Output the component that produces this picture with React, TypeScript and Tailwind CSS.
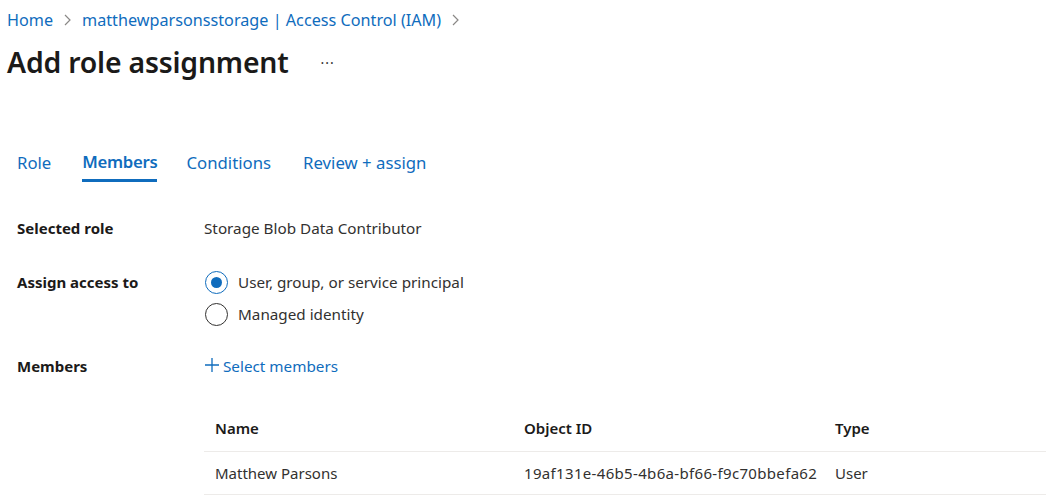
import React from "react";

const font = { fontFamily: '"Noto Sans", "Open Sans", sans-serif' };

export default function App() {
  return (
    <div className="w-[1046px] h-[497px] bg-white overflow-hidden text-[#323130]" style={font}>
      {/* breadcrumb */}
      <div className="flex items-center h-[40px] pl-[7px] text-[16.2px] text-[#0f6cbd]">
        <span>Home</span>
        <svg className="mx-[10px]" width="9" height="14" viewBox="0 0 9 14"><path d="M2 2l5 5-5 5" fill="none" stroke="#8a8886" strokeWidth="1.2" /></svg>
        <span>matthewparsonsstorage | Access Control (IAM)</span>
        <svg className="ml-[10px]" width="9" height="14" viewBox="0 0 9 14"><path d="M2 2l5 5-5 5" fill="none" stroke="#8a8886" strokeWidth="1.2" /></svg>
      </div>
      {/* title */}
      <div className="flex items-center h-[44px] pl-[7px]">
        <h1 className="text-[28.4px] font-semibold text-[#1b1a19] tracking-[-0.2px]">Add role assignment</h1>
        <span className="ml-[32px] text-[14px] text-[#323130] tracking-[1px]">···</span>
      </div>
      {/* tabs */}
      <div className="flex items-end h-[98px] pl-[17px] text-[16.75px] text-[#0f6cbd]">
        <div className="pb-[7px] mr-[31px]"><span>Role</span></div>
        <div className="mr-[29px] flex flex-col">
          <span className="font-semibold tracking-[-0.3px]">Members</span>
          <div className="h-[3px] bg-[#0f6cbd] mt-[5px]" />
        </div>
        <div className="pb-[7px] mr-[32px]"><span>Conditions</span></div>
        <div className="pb-[7px]"><span>Review + assign</span></div>
      </div>
      {/* form */}
      <div className="text-[15.25px]">
        <div className="flex items-center h-[30px] mt-[31px]">
          <div className="w-[204px] pl-[17px] font-bold text-[#1b1a19] text-[15px]">Selected role</div>
          <div>Storage Blob Data Contributor</div>
        </div>
        <div className="flex mt-[23px]">
          <div className="w-[204px] pl-[17px] font-bold text-[#1b1a19] text-[15px] h-[32px] flex items-center">Assign access to</div>
          <div className="flex flex-col">
            <div className="flex items-center h-[32px]">
              <div className="w-[23px] h-[23px] ml-[1px] rounded-full border-[1.5px] border-[#0f6cbd] flex items-center justify-center">
                <div className="w-[11px] h-[11px] rounded-full bg-[#0f6cbd]" />
              </div>
              <span className="ml-[10px]">User, group, or service principal</span>
            </div>
            <div className="flex items-center h-[32px]">
              <div className="w-[23px] h-[23px] ml-[1px] rounded-full border-[1.5px] border-[#323130]" />
              <span className="ml-[10px]">Managed identity</span>
            </div>
          </div>
        </div>
        <div className="flex items-center h-[30px] mt-[21px]">
          <div className="w-[204px] pl-[17px] font-bold text-[#1b1a19] text-[15px]">Members</div>
          <div className="flex items-center text-[#0f6cbd]">
            <svg width="16" height="16" viewBox="0 0 16 16" className="mr-[3px] mb-[3px]"><path d="M8 1v14M1 8h14" stroke="#0f6cbd" strokeWidth="1.3" /></svg>
            <span>Select members</span>
          </div>
        </div>
        {/* table */}
        <div className="ml-[204px] mt-[28px] text-[15px]">
          <div className="flex items-center h-[43px] pb-[3px] border-b border-[#edebe9] font-semibold text-[#1b1a19]">
            <div className="w-[320px] pl-[11px]">Name</div>
            <div className="w-[311px]">Object ID</div>
            <div>Type</div>
          </div>
          <div className="flex items-center h-[43px] border-b border-[#edebe9]">
            <div className="w-[320px] pl-[11px]">Matthew Parsons</div>
            <div className="w-[311px] tracking-[0.33px]">19af131e-46b5-4b6a-bf66-f9c70bbefa62</div>
            <div>User</div>
          </div>
        </div>
      </div>
    </div>
  );
}
